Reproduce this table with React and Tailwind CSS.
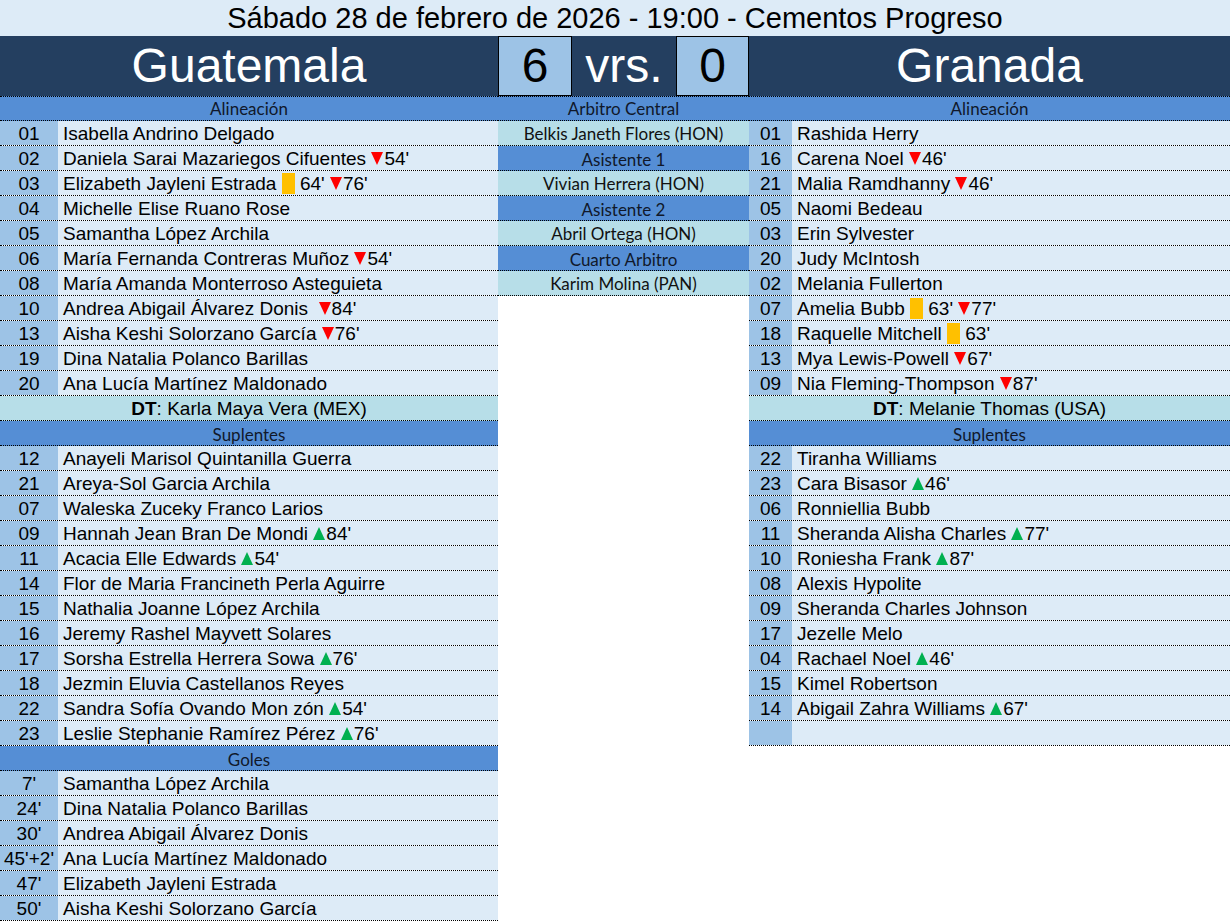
import React from "react";

const leftXI = [
  ["01", "Isabella Andrino Delgado"],
  ["02", "Daniela Sarai Mazariegos Cifuentes ▼54'"],
  ["03", "Elizabeth Jayleni Estrada ■ 64' ▼76'"],
  ["04", "Michelle Elise Ruano Rose"],
  ["05", "Samantha López Archila"],
  ["06", "María Fernanda Contreras Muñoz ▼54'"],
  ["08", "María Amanda Monterroso Asteguieta"],
  ["10", "Andrea Abigail Álvarez Donis  ▼84'"],
  ["13", "Aisha Keshi Solorzano García ▼76'"],
  ["19", "Dina Natalia Polanco Barillas"],
  ["20", "Ana Lucía Martínez Maldonado"],
];
const leftSubs = [
  ["12", "Anayeli Marisol Quintanilla Guerra"],
  ["21", "Areya-Sol Garcia Archila"],
  ["07", "Waleska Zuceky Franco Larios"],
  ["09", "Hannah Jean Bran De Mondi ▲84'"],
  ["11", "Acacia Elle Edwards ▲54'"],
  ["14", "Flor de Maria Francineth Perla Aguirre"],
  ["15", "Nathalia Joanne López Archila"],
  ["16", "Jeremy Rashel Mayvett Solares"],
  ["17", "Sorsha Estrella Herrera Sowa ▲76'"],
  ["18", "Jezmin Eluvia Castellanos Reyes"],
  ["22", "Sandra Sofía Ovando Mon zón ▲54'"],
  ["23", "Leslie Stephanie Ramírez Pérez ▲76'"],
];
const goals = [
  ["7'", "Samantha López Archila"],
  ["24'", "Dina Natalia Polanco Barillas"],
  ["30'", "Andrea Abigail Álvarez Donis"],
  ["45'+2'", "Ana Lucía Martínez Maldonado"],
  ["47'", "Elizabeth Jayleni Estrada"],
  ["50'", "Aisha Keshi Solorzano García"],
];
const rightXI = [
  ["01", "Rashida Herry"],
  ["16", "Carena Noel ▼46'"],
  ["21", "Malia Ramdhanny ▼46'"],
  ["05", "Naomi Bedeau"],
  ["03", "Erin Sylvester"],
  ["20", "Judy McIntosh"],
  ["02", "Melania Fullerton"],
  ["07", "Amelia Bubb ■ 63' ▼77'"],
  ["18", "Raquelle Mitchell ■ 63'"],
  ["13", "Mya Lewis-Powell ▼67'"],
  ["09", "Nia Fleming-Thompson ▼87'"],
];
const rightSubs = [
  ["22", "Tiranha Williams"],
  ["23", "Cara Bisasor ▲46'"],
  ["06", "Ronniellia Bubb"],
  ["11", "Sheranda Alisha Charles ▲77'"],
  ["10", "Roniesha Frank ▲87'"],
  ["08", "Alexis Hypolite"],
  ["09", "Sheranda Charles Johnson"],
  ["17", "Jezelle Melo"],
  ["04", "Rachael Noel ▲46'"],
  ["15", "Kimel Robertson"],
  ["14", "Abigail Zahra Williams ▲67'"],
  ["", ""],
];

function Down() {
  return (
    <svg width="12" height="13" viewBox="0 0 12 13" className="inline-block align-[0px] mr-[1px]">
      <polygon points="0,0 12,0 6,13" fill="#ff0000" />
    </svg>
  );
}
function Up() {
  return (
    <svg width="12" height="13" viewBox="0 0 12 13" className="inline-block align-[0px] mr-[1px]">
      <polygon points="0,13 12,13 6,0" fill="#00b050" />
    </svg>
  );
}
function Card() {
  return <span className="inline-block w-[13px] h-[21px] bg-[#ffc000] align-middle" />;
}

function Rich({ text }) {
  const parts = text.split(/([▼▲■])/);
  return (
    <>
      {parts.map((p, i) => {
        if (p === "▼") return <Down key={i} />;
        if (p === "▲") return <Up key={i} />;
        if (p === "■") return <Card key={i} />;
        return <span key={i}>{p}</span>;
      })}
    </>
  );
}

function Row({ num, name, numClass }) {
  return (
    <div className="flex h-[25px] border-b border-dotted border-black">
      <div className={numClass}>{num}</div>
      <div className="flex-1 bg-[#ddebf7] flex items-center pl-[5px] pt-[1px] whitespace-pre">
        <Rich text={name} />
      </div>
    </div>
  );
}

function Head({ children, top }) {
  return (
    <div
      className={
        top
          ? "h-[25px] bg-[#558ed5] border-y border-dotted border-black flex items-center justify-center text-[17px] text-[#10182a] font-['Lato',sans-serif]"
          : "h-[25px] bg-[#558ed5] border-b border-dotted border-black flex items-center justify-center pt-[2px] text-[17px] text-[#10182a] font-['Lato',sans-serif]"
      }
    >
      {children}
    </div>
  );
}

function Teal({ children }) {
  return (
    <div className="h-[25px] bg-[#b7dee8] border-b border-dotted border-black flex items-center justify-center text-[17px] text-[#111] font-['Lato',sans-serif]">
      {children}
    </div>
  );
}

function DT({ name }) {
  return (
    <div className="h-[25px] bg-[#b7dee8] border-b border-dotted border-black flex items-center justify-center pt-[1px] whitespace-pre">
      <b>DT</b>
      <span>: {name}</span>
    </div>
  );
}

const LNUM = "w-[58px] bg-[#9dc3e6] flex items-center justify-center pt-[1px]";
const RNUM = "w-[43px] bg-[#9dc3e6] flex items-center justify-center pt-[1px]";

export default function App() {
  return (
    <div className="w-[1230px] bg-white text-black text-[19px] leading-none font-['Liberation_Sans',Arial,sans-serif]">
      <div className="h-[36px] bg-[#ddebf7] flex items-center justify-center text-[29px]">
        Sábado 28 de febrero de 2026 - 19:00 - Cementos Progreso
      </div>
      <div className="flex h-[60px] bg-[#243f60]">
        <div className="w-[498px] flex items-center justify-center text-white text-[48px]">Guatemala</div>
        <div className="w-[251px] flex">
          <div className="w-[74px] h-[60px] border border-black bg-[#9dc3e6] flex items-center justify-center text-[48px]">6</div>
          <div className="w-[104px] flex items-center justify-center text-white text-[48px]">vrs.</div>
          <div className="w-[73px] h-[60px] border border-black bg-[#9dc3e6] flex items-center justify-center text-[48px]">0</div>
        </div>
        <div className="flex-1 flex items-center justify-center text-white text-[48px]">Granada</div>
      </div>
      <div className="flex items-start">
        <div className="w-[498px] flex flex-col">
          <Head top>Alineación</Head>
          {leftXI.map(([n, s], i) => (
            <Row key={"a" + i} num={n} name={s} numClass={LNUM} />
          ))}
          <DT name="Karla Maya Vera (MEX)" />
          <Head>Suplentes</Head>
          {leftSubs.map(([n, s], i) => (
            <Row key={"b" + i} num={n} name={s} numClass={LNUM} />
          ))}
          <Head>Goles</Head>
          {goals.map(([n, s], i) => (
            <Row key={"c" + i} num={n} name={s} numClass={LNUM} />
          ))}
        </div>
        <div className="w-[251px] flex flex-col">
          <Head top>Arbitro Central</Head>
          <Teal>Belkis Janeth Flores (HON)</Teal>
          <Head>Asistente 1</Head>
          <Teal>Vivian Herrera (HON)</Teal>
          <Head>Asistente 2</Head>
          <Teal>Abril Ortega (HON)</Teal>
          <Head>Cuarto Arbitro</Head>
          <Teal>Karim Molina (PAN)</Teal>
        </div>
        <div className="flex-1 flex flex-col">
          <Head top>Alineación</Head>
          {rightXI.map(([n, s], i) => (
            <Row key={"d" + i} num={n} name={s} numClass={RNUM} />
          ))}
          <DT name="Melanie Thomas (USA)" />
          <Head>Suplentes</Head>
          {rightSubs.map(([n, s], i) => (
            <Row key={"e" + i} num={n} name={s} numClass={RNUM} />
          ))}
        </div>
      </div>
    </div>
  );
}
